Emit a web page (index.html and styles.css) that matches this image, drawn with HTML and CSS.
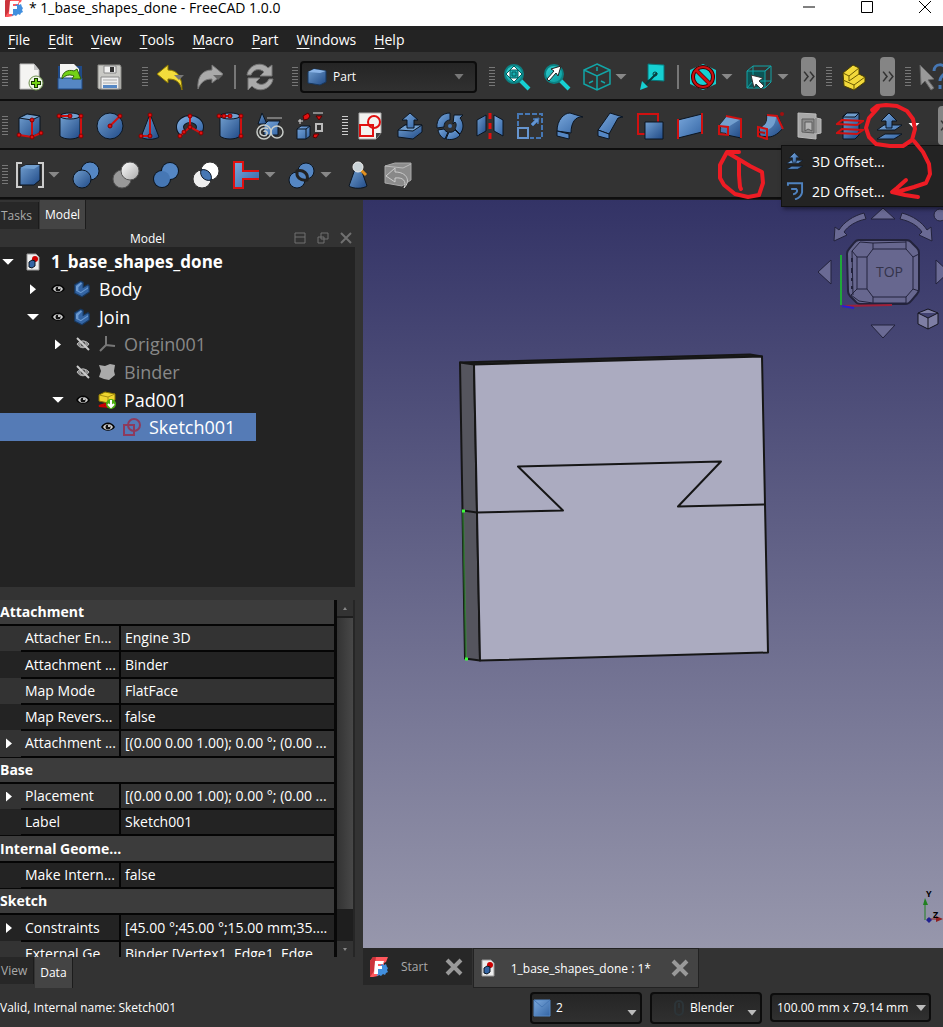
FILE: index.html
```html
<!DOCTYPE html>
<html lang="en">
<head>
    <meta charset="UTF-8">
    <meta name="viewport" content="width=device-width, initial-scale=1.0">
    <title>* 1_base_shapes_done - FreeCAD 1.0.0</title>
    <link rel="stylesheet" href="styles.css">
</head>
<body>

<!-- Shared gradients and symbols -->
<svg class="defs" aria-hidden="true">
    <defs>
        <linearGradient id="blue" x1="0" y1="0" x2="1" y2="1">
            <stop offset="0" stop-color="#729fcf"/><stop offset="1" stop-color="#204a87"/>
        </linearGradient>
        <linearGradient id="lite" x1="0" y1="0" x2="1" y2="1">
            <stop offset="0" stop-color="#7aa8dc"/><stop offset="1" stop-color="#3465a4"/>
        </linearGradient>
        <linearGradient id="grey" x1="0" y1="0" x2="1" y2="1">
            <stop offset="0" stop-color="#ffffff"/><stop offset="1" stop-color="#a8a8a8"/>
        </linearGradient>
        <linearGradient id="teal" x1="0" y1="0" x2="1" y2="1">
            <stop offset="0" stop-color="#34d0d2"/><stop offset="1" stop-color="#06989a"/>
        </linearGradient>
        <symbol id="i-logo" viewBox="0 0 18 20">
            <path d="M3 0h15l-2 5-2 1v4l-6 9-5 1H0V4z" fill="#ff585d"/>
            <path d="M0 4l3-4h3L4 14l-4 6z" fill="#cb333b"/>
            <path d="M10 9l2-2 2 1 2-1 1 3 1 1-1 2 1 2-2 1-1 2-2-1-2 2-2-1-2 1 1-8z" fill="#418fde"/>
            <path d="M5 4h9l-1 3H8v2h4v3H8v5H4z" fill="#fff"/>
        </symbol>
        <symbol id="i-doc" viewBox="0 0 14 18">
            <path d="M1 1h9l3 3v13H1z" fill="#eee" stroke="#999"/>
            <circle cx="9" cy="6" r="3" fill="#cc0000"/>
            <path d="M3 9l3-2 3 1v5l-3 2-3-1z" fill="#3465a4" stroke="#0b1521"/>
        </symbol>
        <symbol id="i-eye" viewBox="0 0 14 10">
            <path d="M0 5c3-6 11-6 14 0-3 5-11 5-14 0z" fill="#050505"/>
            <path d="M2 5c2-4 8-4 10 0-2 4-8 4-10 0z" fill="#d0d0d0"/>
            <circle cx="7" cy="5" r="2.500" fill="#111"/><circle cx="8" cy="4" r="1" fill="#fff"/>
        </symbol>
        <symbol id="i-hidden" viewBox="0 0 14 14">
            <path d="M1 7c3-4 9-4 12 0-3 5-9 5-12 0z" fill="#888" stroke="#bbb"/>
            <circle cx="7" cy="7" r="3" fill="#555" stroke="#aaa"/>
            <path d="M1 1l12 12" stroke="#ccc" stroke-width="2"/>
        </symbol>
        <symbol id="i-body" viewBox="0 0 14 15">
            <path d="M1 4l5-3 2 1v4l4-2 1 1v5l-6 4-6-3z" fill="#3465a4" stroke="#173860"/>
            <path d="M2 5l4-3 1 1-3 3v3l2 1 6-4v1l-6 4-4-2z" fill="#6b9ad2"/>
        </symbol>
        <symbol id="i-sketch" viewBox="0 0 18 18">
            <g fill="none" stroke="#8d3a5c" stroke-width="2"><path d="M1 7h10v10H1z"/><circle cx="11" cy="7" r="6"/></g>
        </symbol>
        <symbol id="i-offset3d" viewBox="0 0 28 28">
            <g fill="url(#lite)" stroke="#0b1521">
                <path d="M8 13h18l-7 5H1zM9 22h17l-8 5H1z"/>
                <path d="M13 1l8 8h-5v7h-6V9H5z"/>
            </g>
        </symbol>
        <symbol id="i-more" viewBox="0 0 15 40">
            <path d="M3 15l4 5-4 5M9 15l4 5-4 5" fill="none" stroke="#333" stroke-width="1.6"/>
        </symbol>
    </defs>
</svg>

<!-- Title Bar -->
<header class="titlebar">
    <svg class="logo"><use href="#i-logo"/></svg>
    <h1>* 1_base_shapes_done - FreeCAD 1.0.0</h1>
    <div class="window-buttons">
        <button aria-label="Minimize"><svg viewBox="0 0 14 14"><path d="M1 7h12"/></svg></button>
        <button aria-label="Maximize"><svg viewBox="0 0 14 14"><path d="M1.500 1.500h11v11h-11z"/></svg></button>
        <button aria-label="Close"><svg viewBox="0 0 14 14"><path d="M1 1l12 12M13 1L1 13"/></svg></button>
    </div>
</header>

<!-- Menu Bar -->
<nav class="menubar">
    <button><u>F</u>ile</button>
    <button><u>E</u>dit</button>
    <button><u>V</u>iew</button>
    <button><u>T</u>ools</button>
    <button><u>M</u>acro</button>
    <button><u>P</u>art</button>
    <button><u>W</u>indows</button>
    <button><u>H</u>elp</button>
</nav>

<!-- File, Workbench and View Toolbars -->
<div class="toolbar">
    <div class="group">
        <span class="grip"></span>
        <button class="tool" aria-label="New"><svg viewBox="0 0 28 28"><path d="M4 1h14l5 6v19H4z" fill="#f4f4f2" stroke="#bbb"/><path d="M18 1v6h5z" fill="#c4c4c4"/><circle cx="20" cy="20" r="7" fill="#eef5e8" stroke="#6b8f4a"/><path d="M20 15v10M15 20h10" stroke="#173b02" stroke-width="4"/><path d="M20 16v8M16 20h8" stroke="#73d216" stroke-width="2"/></svg></button>
        <button class="tool" aria-label="Open"><svg viewBox="0 0 28 28"><path d="M2 3h24v23H2z" fill="#204a87"/><path d="M4 1h14l5 5v12H4z" fill="#f4f4f2"/><path d="M2 15h24v11H2z" fill="#5587c4" stroke="#204a87"/><path d="M6 16c0-7 6-10 12-8l3-2 4 10-9 0 2-3c-4-2-9-1-12 3z" fill="#73d216" stroke="#2f5e08"/></svg></button>
        <button class="tool" aria-label="Save"><svg viewBox="0 0 28 28"><path d="M2 2h22l1 2v22H3l-1-1z" fill="#c9c9c5" stroke="#8c8c88"/><path d="M8 3h12v7H8z" fill="#f0f0f0" stroke="#888"/><path d="M14 4h4v5h-4z" fill="#333"/><path d="M5 14h18v12H5z" fill="#eee" stroke="#888"/><path d="M7 17h14M7 20h14" stroke="#aaa"/><path d="M7 22h14v3H7z" fill="#5587c4"/></svg></button>
    </div>
    <div class="group">
        <span class="grip"></span>
        <button class="tool" aria-label="Undo"><svg viewBox="0 0 28 28"><path d="M1 11L12 2v5c10 0 14 7 14 20-2-8-6-11-14-11v4z" fill="#f3dc3c" stroke="#8a7600"/><path d="M18 12h10l-5 5z" fill="#777"/></svg></button>
        <button class="tool" aria-label="Redo"><svg viewBox="0 0 28 28"><path d="M27 11L16 2v5C6 7 1 14 2 26c3-7 7-10 14-10v4z" fill="#aaa" stroke="#777"/><path d="M17 12h10l-5 5z" fill="#666"/></svg></button>
        <span class="separator"></span>
        <button class="tool" aria-label="Refresh"><svg viewBox="0 0 28 28"><path d="M1 12C3 1 16-2 22 5l4-3v11H14l4-4c-4-4-11-3-13 3zM27 16c-2 11-15 14-21 7l-4 4V15h12l-4 4c4 4 10 3 13-3z" fill="#aaa" stroke="#777"/></svg></button>
    </div>
    <div class="group workbench">
        <span class="grip"></span>
        <label class="combo combo-wide">
            <svg class="combo-icon" viewBox="0 0 20 18"><path d="M1 4l6-3 12 2v11l-6 3-12-2z" fill="url(#blue)" stroke="#173860"/><path d="M1 4l6-3 12 2-6 2z" fill="#8ab4e6"/></svg>
            <select aria-label="Workbench"><option>Part</option></select>
        </label>
    </div>
    <div class="group tight">
        <span class="grip"></span>
        <button class="tool" aria-label="Fit all"><svg viewBox="0 0 28 28"><path d="M17 17l9 9" stroke="#16d0d2" stroke-width="4"/><circle cx="11" cy="11" r="9" fill="url(#teal)" stroke="#0b8284" stroke-width="2"/><path d="M11 3l4 4H7zM11 19l4-4H7zM3 11l4-4v8zM19 11l-4-4v8z" fill="#fff" stroke="#06595a"/><path d="M9 9h4v4H9z" fill="#16b0b2" stroke="#06595a"/></svg></button>
        <button class="tool" aria-label="Fit selection"><svg viewBox="0 0 28 28"><path d="M17 17l9 9" stroke="#16d0d2" stroke-width="4"/><circle cx="11" cy="11" r="9" fill="url(#teal)" stroke="#0b8284" stroke-width="2"/><path d="M4 16l7-8-3-2 10-3-3 10-2-3-7 8z" fill="#fff" stroke="#222"/></svg></button>
        <button class="tool" aria-label="Isometric"><svg viewBox="0 0 28 28"><path d="M14 1l13 6v14l-13 6-13-6V7zM1 7l13 6 13-6M14 13v14M14 4v4M6 20l4-2M22 20l-4-2" fill="none" stroke="#12a5a7" stroke-width="1.500"/></svg><i class="caret"></i></button>
        <button class="tool" aria-label="Align view"><svg viewBox="0 0 28 28"><path d="M9 1l16 1v16L9 17z" fill="#16d0d2" stroke="#06777a"/><path d="M18 10L6 22" stroke="#073b3c" stroke-width="2"/><circle cx="16" cy="11" r="2" fill="none" stroke="#073b3c"/><path d="M1 27l2-9 6 6z" fill="#16d0d2"/></svg></button>
        <span class="separator"></span>
        <button class="tool" aria-label="Draw style"><svg viewBox="0 0 28 28"><path d="M14 1l13 6v14l-13 6-13-6V7z" fill="#16d0d2"/><circle cx="14" cy="14" r="10" fill="none" stroke="#3c0000" stroke-width="4"/><path d="M7 7l14 14" stroke="#3c0000" stroke-width="4"/><circle cx="14" cy="14" r="10" fill="none" stroke="#cc1010" stroke-width="2"/><path d="M7 7l14 14" stroke="#cc1010" stroke-width="3"/></svg><i class="caret"></i></button>
        <button class="tool" aria-label="Selection"><svg viewBox="0 0 28 28"><path d="M2 8h18v17H2z" fill="#0c5556"/><path d="M2 8l6-5h18l-6 5H2v17h18V8l6-5v16l-6 6M8 3v15h18M8 18l-6 7" fill="none" stroke="#12a5a7"/><path d="M6 12l12 3-4 3 5 5-3 3-5-5-2 4z" fill="#fff" stroke="#333"/></svg><i class="caret"></i></button>
        <button class="more" aria-label="More"><svg><use href="#i-more"/></svg></button>
    </div>
    <div class="group tight">
        <span class="grip"></span>
        <button class="tool" aria-label="Part"><svg viewBox="0 0 28 28"><path d="M3 10l10-8 6 3v6l6 3v5l-11 8-10-4z" fill="#f2d93b" stroke="#4a3f00"/><path d="M3 10l6 3 10-8M9 13v5l10-7M3 17l11 5 11-8M14 22v5" fill="none" stroke="#6a5a00"/></svg></button>
        <button class="more" aria-label="More"><svg><use href="#i-more"/></svg></button>
    </div>
    <div class="group">
        <span class="grip"></span>
        <button class="tool" aria-label="What's this?"><svg viewBox="0 0 28 28"><path d="M1 2l14 14-6 1 6 8-3 2-6-9-4 4z" fill="#999" stroke="#666"/><path d="M15 8c0-8 11-8 12-1 0 5-6 5-6 11M21 22v4" fill="none" stroke="#4677b4" stroke-width="3"/></svg></button>
    </div>
</div>

<!-- Primitives and Part Tools -->
<div class="toolbar">
    <div class="group">
        <span class="grip"></span>
        <button class="tool" aria-label="Cube"><svg viewBox="0 0 28 28"><path d="M3 6l8-4 13 2v17l-9 4-12-2z" fill="url(#blue)" stroke="#0b1521"/><path d="M3 6l8-4 13 2-8 4z" fill="#729fcf" stroke="#0b1521"/><path class="red" d="M16 8v17M3 23l13 2 9-4"/><g class="dots"><circle cx="16" cy="8" r="2"/><circle cx="3" cy="23" r="2"/><circle cx="16" cy="25" r="2"/><circle cx="25" cy="21" r="2"/></g></svg></button>
        <button class="tool" aria-label="Cylinder"><svg viewBox="0 0 28 28"><path d="M4 4v20c4 4 16 4 20 0V4z" fill="url(#blue)" stroke="#0b1521"/><ellipse cx="14" cy="4" rx="10" ry="3" fill="#729fcf" stroke="#0b1521"/><path class="red" d="M3 4h11M25 4v20"/><g class="dots"><circle cx="3" cy="4" r="2"/><circle cx="14" cy="4" r="2"/><circle cx="25" cy="4" r="2"/><circle cx="25" cy="24" r="2"/></g></svg></button>
        <button class="tool" aria-label="Sphere"><svg viewBox="0 0 28 28"><circle cx="14" cy="14" r="13" fill="url(#blue)" stroke="#0b1521"/><path class="red" d="M14 14L24 4"/><g class="dots"><circle cx="14" cy="14" r="2"/><circle cx="24" cy="4" r="2"/></g></svg></button>
        <button class="tool" aria-label="Cone"><svg viewBox="0 0 28 28"><path d="M14 2L5 25c4 3 14 3 18 0z" fill="url(#blue)" stroke="#0b1521"/><path class="red" d="M14 3v21H5"/><g class="dots"><circle cx="14" cy="3" r="2"/><circle cx="14" cy="24" r="2"/><circle cx="5" cy="24" r="2"/></g></svg></button>
        <button class="tool" aria-label="Torus"><svg viewBox="0 0 28 28"><ellipse cx="14" cy="15" rx="10" ry="8" fill="none" stroke="#0b1521" stroke-width="8"/><ellipse cx="14" cy="15" rx="10" ry="8" fill="none" stroke="url(#lite)" stroke-width="6"/><path d="M14 15L4 24l4 4h14l3-7z" fill="#333"/><path class="red" d="M14 4v11l11 6M14 15l-10 9"/><g class="dots"><circle cx="14" cy="4" r="2"/><circle cx="14" cy="15" r="2"/><circle cx="25" cy="21" r="2"/><circle cx="4" cy="24" r="2"/><circle cx="8" cy="20" r="2"/></g></svg></button>
        <button class="tool" aria-label="Tube"><svg viewBox="0 0 28 28"><path d="M4 4v20c4 4 16 4 20 0V4z" fill="url(#blue)" stroke="#0b1521"/><ellipse cx="14" cy="4" rx="10" ry="3" fill="#729fcf" stroke="#0b1521"/><path class="red" d="M3 4h12M25 4v20"/><g class="dots"><circle cx="3" cy="4" r="2"/><circle cx="8" cy="4" r="2"/><circle cx="14" cy="4" r="2"/><circle cx="25" cy="4" r="2"/><circle cx="25" cy="24" r="2"/></g></svg></button>
        <button class="tool" aria-label="Primitives"><svg viewBox="0 0 28 28"><path d="M6 1L2 12h9z" fill="url(#blue)" stroke="#0b1521"/><path d="M11 6h15" stroke="#777" stroke-width="2"/><path d="M8 13l4-4h12l-2 4v10H8z" fill="url(#lite)" stroke="#0b1521"/><g fill="none" stroke="#c8ccc8" stroke-width="1.500"><circle cx="8" cy="20" r="7"/><path d="M8 20c0-2 4-1 3 2s-7 2-7-2 6-5 8-3"/><circle cx="21" cy="20" r="6"/></g></svg></button>
        <button class="tool" aria-label="Shape builder"><svg viewBox="0 0 28 28"><path d="M1 17l4-3h9v10l-4 3H1z" fill="url(#lite)" stroke="#0b1521"/><path d="M1 17h9v10M10 17l4-3" fill="none" stroke="#0b1521"/><path d="M4 7v5M2 9h5M17 1h10" stroke="#ddd"/><path d="M20 12h6v7h-6z" fill="none" stroke="#bbb" stroke-width="2"/><path d="M7 4l5-3 2 3-2 3-4 1zM20 4h6l-3 4zM18 22l5 0-3 4-3-1z" fill="#e01010" stroke="#500"/></svg></button>
    </div>
    <div class="group">
        <span class="grip bright"></span>
        <button class="tool" aria-label="Sketch"><svg viewBox="0 0 28 28"><path d="M3 1h22v20l-5 6H3z" fill="#f2f2f0" stroke="#aaa"/><path d="M20 27v-6h5z" fill="#444"/><g fill="none" stroke="#e01010" stroke-width="2"><path d="M4 13h13v11H4z"/><circle cx="18" cy="10" r="6"/></g></svg></button>
        <button class="tool" aria-label="Extrude"><svg viewBox="0 0 28 28"><path d="M2 18l7-5h17v7l-9 7-15-2z" fill="url(#blue)" stroke="#0b1521"/><path d="M2 18l7-5h17l-9 6z" fill="#729fcf" stroke="#0b1521"/><path d="M14 1l8 7h-4v8h-7V8H6z" fill="url(#lite)" stroke="#0b1521"/></svg></button>
        <button class="tool" aria-label="Revolve"><svg viewBox="0 0 28 28"><g fill="url(#lite)" stroke="#0b1521"><path d="M14 1v7c-4 0-6 3-6 7l-7 1C0 7 6 1 14 1z"/><path d="M2 18l6-1c1 2 3 3 4 3l-3 7c-3-1-6-4-7-9z"/><path d="M13 20c3 1 5-1 6-2l5 5c-4 5-10 5-14 4z"/><path d="M19 17c1-2 2-5 0-7l-2 2 1-9 9 0-3 3c4 5 4 11 0 16z"/></g><circle cx="14" cy="14" r="2" fill="#4677b4"/></svg></button>
        <button class="tool" aria-label="Mirror"><svg viewBox="0 0 28 28"><path d="M1 8l9-5v16l-9 5z" fill="url(#blue)" stroke="#0b1521"/><path d="M27 8l-9-5v16l9 5z" fill="url(#lite)" stroke="#0b1521"/><path d="M14 1v6M14 11v6M14 21v6" stroke="#e01010" stroke-width="3"/></svg></button>
        <button class="tool" aria-label="Scale"><svg viewBox="0 0 28 28"><path d="M2 2h24v24H2z" fill="none" stroke="#4677b4" stroke-width="2" stroke-dasharray="5 2"/><path d="M0 14h14v14H0z" fill="#333"/><path d="M2 16h10v10H2z" fill="none" stroke="#6695cf" stroke-width="2"/><path d="M15 12l4-4-2-1 6-1-1 6-1-2-4 4z" fill="#6695cf" stroke="#4677b4"/></svg></button>
        <button class="tool" aria-label="Fillet"><svg viewBox="0 0 28 28"><path d="M1 19C1 8 8 1 14 1l13 4c-8-1-12 6-12 16z" fill="url(#lite)" stroke="#0b1521"/><path d="M1 19l12 3v5L1 24z" fill="#5587c4" stroke="#0b1521"/></svg></button>
        <button class="tool" aria-label="Chamfer"><svg viewBox="0 0 28 28"><path d="M2 18L14 1l13 4-5 1-9 16z" fill="url(#lite)" stroke="#0b1521"/><path d="M2 18l11 4v5L2 24z" fill="#5587c4" stroke="#0b1521"/></svg></button>
        <button class="tool" aria-label="Make face"><svg viewBox="0 0 28 28"><path class="red" d="M2 2h20v20H2z"/><path d="M9 10h18v17H9z" fill="url(#blue)" stroke="#0b1521"/></svg></button>
        <button class="tool" aria-label="Ruled surface"><svg viewBox="0 0 28 28"><path d="M2 8l24-6v18L2 26z" fill="url(#lite)" stroke="#0b1521"/><path class="red" d="M2 7v20M26 1v21"/></svg></button>
        <button class="tool" aria-label="Loft"><svg viewBox="0 0 28 28"><path d="M3 14l8-10 14 3v19l-14-3z" fill="url(#blue)" stroke="#0b1521"/><path d="M3 14l8-10 14 3-13 8z" fill="#729fcf"/><path class="red" d="M10 4l15 3v19M3 14l9 1v8l-9-1z"/><path d="M5 16l5 1v4l-5-1z" fill="#4677b4"/></svg></button>
        <button class="tool" aria-label="Sweep"><svg viewBox="0 0 28 28"><path d="M3 16c7-2 9-7 8-13l11 1 5 12c-4 5-9 9-15 9l-8-1z" fill="url(#blue)" stroke="#0b1521"/><path d="M3 16c7-2 9-7 8-13l9 1c0 7-3 12-9 14z" fill="#729fcf"/><path class="red" d="M11 3l10 1 6 13M2 15l9 2v10l-9-3z"/><path d="M3 20l6 1" stroke="#b01010" stroke-width="2"/><circle cx="26" cy="2" r="2" fill="#a01010"/></svg></button>
        <button class="tool" aria-label="Section"><svg viewBox="0 0 28 28"><path d="M2 1l18 1v4l5 1v14l-5 1v5L2 25z" fill="#a8a8a8" stroke="#bbb"/><path d="M6 7h12v14l-12-1z" fill="#8c8c8c" stroke="#5c5c5c"/><path d="M9 10h7v9l-4-2-3 2z" fill="#b4b4b4" stroke="#5c5c5c"/><path d="M20 6v15" stroke="#777"/></svg></button>
        <button class="tool" aria-label="Cross-sections"><svg viewBox="0 0 28 28"><path d="M7 4l4-3h12v22l-4 4H7z" fill="url(#blue)" stroke="#0b1521"/><path d="M7 5l4-4h12l-4 4z" fill="#729fcf" stroke="#0b1521"/><path d="M6 8l21 1-6 4-20-1zM6 17l21 1-6 4-20-1z" fill="none" stroke="#d01010" stroke-width="2"/></svg></button>
        <button class="tool" aria-label="Offset"><svg><use href="#i-offset3d"/></svg><i class="caret white"></i></button>
    </div>
    <button class="more" aria-label="More"><svg><use href="#i-more"/></svg></button>
    <div class="offset-menu" role="menu">
        <button role="menuitem"><svg><use href="#i-offset3d"/></svg>3D Offset...</button>
        <button role="menuitem"><svg viewBox="0 0 28 28"><g fill="none" stroke="#4f82bf" stroke-width="3"><path d="M3 6V2h22v14c-1 6-5 9-11 11"/><path d="M8 11h8c3 3 0 8-5 8" /></g></svg>2D Offset...</button>
    </div>
</div>

<!-- Boolean Tools -->
<div class="toolbar">
    <div class="group">
        <span class="grip"></span>
        <button class="tool" aria-label="Compound"><svg viewBox="0 0 28 28"><path d="M4 7l6-3h14v15l-6 5H4z" fill="url(#blue)" stroke="#0b1521"/><path d="M4 7l6-3h14l-6 4z" fill="#729fcf"/><path d="M6 2H1v24h5M22 2h5v24h-5" fill="none" stroke="#ccc" stroke-width="2"/></svg><i class="caret"></i></button>
        <button class="tool" aria-label="Boolean"><svg viewBox="0 0 28 28"><circle cx="18" cy="10" r="9" fill="#5587c4" stroke="#0b1521"/><circle cx="10" cy="18" r="9" fill="url(#blue)" stroke="#0b1521"/></svg></button>
        <button class="tool" aria-label="Cut"><svg viewBox="0 0 28 28"><circle cx="10" cy="18" r="9" fill="#999" stroke="#555"/><circle cx="18" cy="10" r="9" fill="url(#grey)" stroke="#555"/></svg></button>
        <button class="tool" aria-label="Union"><svg viewBox="0 0 28 28"><g fill="#0b1521"><circle cx="18" cy="10" r="9"/><circle cx="10" cy="18" r="9"/></g><circle cx="18" cy="10" r="8" fill="#5587c4"/><circle cx="10" cy="18" r="8" fill="#4677b4"/></svg></button>
        <button class="tool" aria-label="Intersection"><svg viewBox="0 0 28 28"><circle cx="18" cy="10" r="9" fill="#fff" stroke="#333"/><circle cx="10" cy="18" r="9" fill="#eee" stroke="#333"/><path d="M9 9c6-2 12 4 10 10-6 2-12-4-10-10z" fill="#4677b4" stroke="#0b1521"/></svg></button>
        <button class="tool" aria-label="Join"><svg viewBox="0 0 28 28"><path d="M2 1h9v26H2zM11 10h16v8H11z" fill="url(#lite)"/><path d="M1 1h11M1 27h11M2 1v26M11 1v9h16M11 27v-9h16" fill="none" stroke="#e01010" stroke-width="2"/></svg><i class="caret"></i></button>
        <button class="tool" aria-label="Split"><svg viewBox="0 0 28 28"><circle cx="18" cy="10" r="8" fill="#5587c4" stroke="#0b1521"/><circle cx="9" cy="19" r="8" fill="#5587c4" stroke="#0b1521"/><path d="M9 10c6-2 12 3 10 9-7 1-11-3-10-9z" fill="#5587c4" stroke="#222" stroke-width="3"/></svg><i class="caret"></i></button>
        <button class="tool" aria-label="Check geometry"><svg viewBox="0 0 28 28"><path d="M11 8L5 25c4 3 14 3 18 0L17 8z" fill="url(#blue)" stroke="#0b1521"/><path d="M17 9l5 5" stroke="#e09020" stroke-width="3"/><circle cx="14" cy="6" r="5" fill="#c9d2d6" stroke="#eee"/></svg></button>
        <button class="tool" aria-label="Defeaturing"><svg viewBox="0 0 28 28"><path d="M1 5l10-3h16v17l-9 6-17-3z" fill="#8c8c8c" stroke="#aaa"/><path d="M1 5l18 2 8-4" fill="none" stroke="#bbb"/><path d="M2 15l9-8v4c12 0 16 9 9 16 3-7-1-11-9-10v4z" fill="#888" stroke="#ccc"/></svg></button>
    </div>
</div>

<!-- Main Area -->
<main>
    <aside>
        <div class="tabs">
            <button>Tasks</button>
            <button class="active">Model</button>
        </div>
        <div class="dock-title">
            <h2>Model</h2>
            <button aria-label="Collapse"><svg viewBox="0 0 12 12"><path d="M1 1h10v10H1zM1 5h10"/></svg></button>
            <button aria-label="Float"><svg viewBox="0 0 12 12"><path d="M4 1h7v6H4zM1 5h6v6H1z"/></svg></button>
            <button aria-label="Close"><svg viewBox="0 0 12 12"><path d="M1 1l10 10M11 1L1 11" stroke-width="2"/></svg></button>
        </div>
        <div class="tree">
            <ul>
                <li class="level-0 root"><i class="arrow open"></i><svg class="doc-icon"><use href="#i-doc"/></svg>1_base_shapes_done</li>
                <li class="level-1"><i class="arrow"></i><svg class="eye"><use href="#i-eye"/></svg><svg class="node"><use href="#i-body"/></svg>Body</li>
                <li class="level-1"><i class="arrow open"></i><svg class="eye"><use href="#i-eye"/></svg><svg class="node"><use href="#i-body"/></svg>Join</li>
                <li class="level-2 dim"><i class="arrow"></i><svg class="eye"><use href="#i-hidden"/></svg><svg class="node" viewBox="0 0 18 18"><path d="M8 1v9l9 1M8 10l-6 6" fill="none" stroke="#777" stroke-width="2"/></svg>Origin001</li>
                <li class="level-2 dim"><i class="arrow none"></i><svg class="eye"><use href="#i-hidden"/></svg><svg class="node" viewBox="0 0 18 18"><path d="M1 2l6 1 5-2 5 1-1 6 1 4-6 5-5-1-5-2 2-6z" fill="#aaa"/></svg>Binder</li>
                <li class="level-2"><i class="arrow open"></i><svg class="eye"><use href="#i-eye"/></svg><svg class="node" viewBox="0 0 18 18"><path d="M1 4l6-3 10 2v6l-7 3-9-2z" fill="#f0d530" stroke="#8a7600"/><path d="M1 4l9 2 7-3M10 6v6" fill="none" stroke="#a89010"/><path d="M1 15l6-2 4 3z" fill="none" stroke="#cc0000" stroke-width="2"/><circle cx="13" cy="13" r="5" fill="#4cae10"/><path d="M13 9v6M10 13l3 3 3-3" fill="none" stroke="#fff" stroke-width="2"/></svg>Pad001</li>
                <li class="level-3 selected"><i class="arrow none"></i><svg class="eye"><use href="#i-eye"/></svg><svg class="node"><use href="#i-sketch"/></svg>Sketch001</li>
            </ul>
        </div>
        <div class="properties">
            <table>
                <colgroup>
                    <col class="col-arrow">
                    <col class="col-name">
                    <col>
                </colgroup>
                <tbody>
                    <tr class="section"><th colspan="3">Attachment</th></tr>
                    <tr><td></td><td>Attacher En...</td><td>Engine 3D</td></tr>
                    <tr class="odd"><td></td><td>Attachment ...</td><td>Binder</td></tr>
                    <tr><td></td><td>Map Mode</td><td>FlatFace</td></tr>
                    <tr class="odd"><td></td><td>Map Revers...</td><td>false</td></tr>
                    <tr><td><i class="arrow"></i></td><td>Attachment ...</td><td>[(0.00 0.00 1.00); 0.00 °; (0.00 ...</td></tr>
                    <tr class="section"><th colspan="3">Base</th></tr>
                    <tr><td><i class="arrow"></i></td><td>Placement</td><td>[(0.00 0.00 1.00); 0.00 °; (0.00 ...</td></tr>
                    <tr class="odd"><td></td><td>Label</td><td>Sketch001</td></tr>
                    <tr class="section"><th colspan="3">Internal Geome...</th></tr>
                    <tr class="odd"><td></td><td>Make Intern...</td><td>false</td></tr>
                    <tr class="section"><th colspan="3">Sketch</th></tr>
                    <tr class="odd"><td><i class="arrow"></i></td><td>Constraints</td><td>[45.00 °;45.00 °;15.00 mm;35....</td></tr>
                    <tr><td></td><td>External Ge...</td><td>Binder [Vertex1, Edge1, Edge...</td></tr>
                </tbody>
            </table>
            <div class="scrollbar">
                <span class="scroll-button up"></span>
                <span class="thumb"></span>
                <span class="scroll-button"></span>
            </div>
        </div>
        <div class="tabs bottom">
            <button>View</button>
            <button class="active">Data</button>
        </div>
    </aside>

    <section class="workspace">
        <div class="viewport">
            <!-- Dovetail part -->
            <svg class="model" viewBox="0 0 580 747">
                <g stroke="#161616" stroke-width="2" stroke-linejoin="round">
                    <path d="M97 162l290-8 12 2-288 8z" fill="#2c2c30"/>
                    <path d="M97 162l14 2 6 296-15-2z" fill="#55555e"/>
                    <path d="M111 164l288-8 6 296-288 8z" fill="#ababc0"/>
                    <path d="M100 310l14 2 86-2-45-44 203-5-43 45 87-2" fill="none"/>
                </g>
                <path d="M100 311l3 147" stroke="#2fa32f" stroke-width="2" stroke-dasharray="1 1"/>
                <path d="M99 309h3v3h-3zM102 457h3v3h-3z" fill="#3cff3c"/>
            </svg>
            <!-- Navigation cube -->
            <svg class="nav-cube" viewBox="0 0 125 135">
                <g fill="#6a6a94" stroke="#23233c">
                    <path d="M53 11l12-11 12 11zM53 117h24L65 130zM0 64l13-12v24zM131 64l-13-12v24z"/>
                    <path d="M46 5c-11 3-20 9-25 17l-4-3-1 14 13-6-3-3c4-6 12-11 22-13zM84 5c11 3 20 9 25 17l4-3 1 14-13-6 3-3c-4-6-12-11-22-13z"/>
                    <circle cx="122" cy="7" r="6"/>
                    <path d="M41 32h47q4 0 6 3l5 5q2 2 2 5v36q0 3-2 5l-6 7q-2 3-6 3H42q-3 0-5-3l-5-5q-2-2-2-5l-1-37q0-3 2-5l5-6q2-3 5-3z" fill="#67678f" stroke-width="2"/>
                    <path d="M55 41h33l7 8v32l-7 8H55l-6-8V49zM39 49h10M39 81h10M39 49v32M55 41v-6M55 89v6M88 41v-8M88 89v6M95 49l6-3M95 81l6 2M39 49l-5-6 8-9 13 1 33-1M39 81l-6 6 8 6 14 2h33M34 43l1 44" fill="none"/>
                    <path d="M34 50v4M34 60v5M34 70v3M34 78v3" stroke-width="2"/>
                    <path d="M100 105l10-4 10 4v11l-10 5-10-5zM100 105l10 5 10-5M110 110v11" fill="#7e7ea4" stroke="#14141f"/>
                </g>
                <text x="58" y="69">TOP</text>
                <path d="M23 47v50" stroke="#1fa83a" stroke-width="2"/>
                <path d="M24 98l50-1" stroke="#a0203a" stroke-width="2"/>
                <path d="M24 98l12 2" stroke="#2a1fd0" stroke-width="2"/>
            </svg>
            <!-- Axis cross -->
            <svg class="axis" viewBox="0 0 20 40">
                <path d="M2 32V14" stroke="#208020"/><path d="M2 10l3 7h-5z" fill="#208020"/>
                <path d="M4 31h12" stroke="#902020"/><path d="M13 28l7 3-7 3z" fill="#902020"/>
                <path d="M6 29l3 3-3 3-3-3z" fill="#202090"/>
                <text x="3" y="9">Y</text><text x="10" y="30">Z</text>
            </svg>
        </div>
        <div class="doc-tabs">
            <button><svg class="logo"><use href="#i-logo"/></svg><span>Start</span><svg class="close" viewBox="0 0 18 18"><path d="M2 2l14 14M16 2L2 16"/></svg></button>
            <button class="active"><svg class="doc-icon"><use href="#i-doc"/></svg><span>1_base_shapes_done : 1*</span><svg class="close" viewBox="0 0 18 18"><path d="M2 2l14 14M16 2L2 16"/></svg></button>
        </div>
    </section>
</main>

<!-- Status Bar -->
<footer>
    <p>Valid, Internal name: Sketch001</p>
    <label class="combo">
        <svg class="combo-icon" viewBox="0 0 18 18"><path d="M1 1h16v16H1z" fill="url(#lite)" stroke="#5587c4"/><path d="M1 1l8 7 8-7" fill="none" stroke="#4677b4"/></svg>
        <select aria-label="Notifications"><option>2</option></select>
    </label>
    <label class="combo combo-nav">
        <svg class="combo-icon" viewBox="0 0 18 18"><path d="M5 6a4 4 0 0 1 8 0v6a4 4 0 0 1-8 0zM9 4v5" fill="none" stroke="#2c3438" stroke-width="2"/></svg>
        <select aria-label="Navigation style"><option>Blender</option></select>
    </label>
    <label class="combo combo-size">
        <select aria-label="View size"><option>100.00 mm x 79.14 mm</option></select>
    </label>
</footer>

<!-- Red pen notes over the toolbars -->
<svg class="notes" viewBox="0 0 240 120" aria-hidden="true">
    <path d="M36 52H24L17 65v13l4 7 11 9 13 3 11-2 4-12-1-11-12-6-10-6-12-7"/>
    <path d="M36 61v14l1 12 1 2"/>
    <path d="M175 8l-9 10-3 10 3 9 7 7 14 2 13 0 9-6 3-11-2-10-6-8-10-5-11-1-9 1-5 4"/>
    <path d="M211 41l9 11 6 12 1 10-4 9-12 4-14 4-7 1M203 80l-9 8-5 4 13 3 13 2"/>
</svg>

</body>
</html>
```
FILE: styles.css
```css
/* General Styles */
* {
    box-sizing: border-box;
}

body {
    margin: 0;
    min-height: 100vh;
    display: flex;
    flex-direction: column;
    position: relative;
    overflow: hidden;
    font-family: "Open Sans", "Noto Sans", sans-serif;
    font-size: 14px;
    color: #fff;
    background-color: #333;
}

button, select {
    font: inherit;
    color: inherit;
    background: none;
    border: none;
    padding: 0;
    margin: 0;
}

h1, h2, p, ul {
    margin: 0;
    padding: 0;
    font-weight: normal;
}

svg {
    display: block;
    flex: none;
}

.defs {
    position: absolute;
    width: 0;
    height: 0;
}

.red {
    fill: none;
    stroke: #d01010;
    stroke-width: 2;
}

.dots {
    fill: #e01010;
    stroke: #800000;
}

/* Title Bar */
.titlebar {
    height: 26px;
    display: flex;
    align-items: flex-start;
    padding: 0 11px 0 5px;
    gap: 6px;
    color: #000;
    background-color: #fff;
}

.logo {
    width: 18px;
    height: 20px;
}

.titlebar .logo {
    margin-top: -3px;
}

.titlebar h1 {
    flex: 1;
    font-size: 14px;
    line-height: 16px;
    white-space: nowrap;
}

.window-buttons {
    display: flex;
    gap: 44px;
}

.window-buttons svg {
    width: 14px;
    height: 14px;
    fill: none;
    stroke: #000;
}

/* Menu Bar */
.menubar {
    height: 26px;
    display: flex;
    align-items: center;
    gap: 18px;
    padding-left: 8px;
    background-color: #232323;
}

.menubar u {
    text-underline-offset: 3px;
}

/* Toolbars */
.toolbar {
    height: 49px;
    display: flex;
    align-items: center;
    position: relative;
    padding: 2px 0 0 2px;
    background-color: #333;
    border-bottom: 2px solid #0e0e0e;
}

.group {
    display: flex;
    align-items: center;
    flex: none;
    gap: 12px;
    margin-right: 18px;
}

.workbench {
    gap: 2px;
    margin-right: 12px;
}

.tight {
    margin-right: 10px;
}

.grip {
    width: 6px;
    height: 20px;
    margin-right: -4px;
    background: repeating-linear-gradient(#777 0 1px, #333 1px 3px);
}

.grip.bright {
    background: repeating-linear-gradient(#ccc 0 1px, #333 1px 3px);
}

.workbench .grip {
    margin-right: 0;
}

.separator {
    width: 2px;
    height: 24px;
    margin: 0 -2px;
    background-color: #777;
}

.tool {
    display: flex;
    align-items: center;
    gap: 4px;
}

.tool svg {
    width: 28px;
    height: 28px;
}

.caret {
    width: 12px;
    height: 6px;
    background-color: #888;
    clip-path: polygon(0 0, 100% 0, 50% 100%);
}

.caret.white {
    background-color: #fff;
}

.more {
    flex: none;
    width: 15px;
    height: 39px;
    border-radius: 4px;
    background-color: #858585;
}

.more svg {
    width: 15px;
    height: 39px;
}

/* Offset Menu */
.offset-menu {
    position: absolute;
    z-index: 2;
    left: 781px;
    top: 44px;
    width: 170px;
    background-color: #232323;
    border: 1px solid #111;
    box-shadow: 2px 2px 4px rgba(0, 0, 0, 0.5);
}

.offset-menu button {
    display: flex;
    align-items: center;
    width: 100%;
    height: 30px;
    gap: 8px;
    padding-left: 4px;
}

.offset-menu svg {
    width: 18px;
    height: 18px;
}

/* Combo Boxes */
.combo {
    position: relative;
    display: block;
    width: 112px;
    height: 32px;
    font-size: 12px;
    border: 2px solid #0c0c0c;
    border-radius: 4px;
    background: linear-gradient(#252525, #303030);
}

.combo select {
    appearance: none;
    width: 100%;
    height: 100%;
    padding-left: 24px;
}

.combo::after {
    content: "";
    position: absolute;
    right: 3px;
    bottom: 6px;
    width: 10px;
    height: 6px;
    background-color: #bbb;
    clip-path: polygon(0 0, 100% 0, 50% 100%);
}

.combo-icon {
    position: absolute;
    left: 1px;
    top: 5px;
    width: 18px;
    height: 18px;
}

.combo-wide {
    width: 177px;
}

.combo-wide select {
    padding-left: 31px;
}

.combo-wide .combo-icon {
    left: 5px;
    width: 20px;
}

.combo-wide::after {
    right: 11px;
    bottom: 11px;
    background-color: #777;
}

.combo-nav select {
    padding-left: 38px;
}

.combo-nav .combo-icon {
    left: 18px;
}

.combo-size {
    width: 161px;
    height: 29px;
}

.combo-size select {
    padding-left: 5px;
}

.combo-size::after {
    bottom: 9px;
}

/* Main Area */
main {
    flex: 1;
    display: flex;
    min-height: 0;
    border-top: 1px solid #1c1c1c;
}

aside {
    width: 355px;
    margin-right: 8px;
    display: flex;
    flex-direction: column;
}

/* Side Tabs */
.tabs {
    display: flex;
    align-items: flex-end;
    gap: 1px;
    height: 29px;
    font-size: 12px;
}

.tabs button {
    height: 27px;
    padding: 0 6px 0 1px;
    color: #aaa;
    background-color: #272727;
    border-right: 1px solid #1c1c1c;
}

.tabs .active {
    height: 29px;
    padding: 0 5px;
    color: #fff;
    background-color: #444;
}

.tabs.bottom {
    align-items: flex-start;
    height: 31px;
}

.tabs.bottom .active {
    height: 31px;
}

.dock-title {
    display: flex;
    align-items: center;
    gap: 11px;
    height: 18px;
    padding-right: 3px;
}

.dock-title h2 {
    flex: 1;
    padding-left: 12px;
    font-size: 12px;
    text-align: center;
}

.dock-title svg {
    width: 12px;
    height: 12px;
    fill: none;
    stroke: #707070;
}

/* Model Tree */
.tree {
    flex: 1;
    padding-top: 1px;
    background-color: #232323;
}

.tree ul {
    display: grid;
    grid-auto-rows: 1fr;
    height: 193px;
    font-size: 18px;
    list-style: none;
}

.tree li {
    display: flex;
    align-items: center;
    width: 256px;
    white-space: nowrap;
}

.arrow {
    flex: none;
    display: block;
    width: 6px;
    height: 10px;
    margin: 0 3px;
    background-color: #fff;
    clip-path: polygon(0 0, 100% 50%, 0 100%);
}

.arrow.open {
    width: 12px;
    height: 6px;
    margin: 0;
    clip-path: polygon(0 0, 100% 0, 50% 100%);
}

.arrow.none {
    visibility: hidden;
}

.level-0 { padding-left: 2px; }
.level-1 { padding-left: 27px; }
.level-2 { padding-left: 52px; }
.level-3 { padding-left: 77px; }

.root {
    font-weight: bold;
    font-size: 17px;
}

.dim {
    color: #888;
}

.selected {
    background-color: #557bb6;
}

.doc-icon {
    width: 14px;
    height: 18px;
}

.tree .doc-icon {
    margin: 0 11px 0 12px;
}

.eye {
    width: 14px;
    height: 14px;
    margin: 0 8px 0 12px;
}

.node {
    width: 18px;
    height: 18px;
    margin-right: 8px;
}

/* Property Editor */
.properties {
    display: flex;
    height: 357px;
    margin-top: 13px;
    overflow: hidden;
    background-color: #080808;
}

table {
    flex: none;
    width: 334px;
    height: 368px;
    table-layout: fixed;
    border-collapse: collapse;
}

.col-arrow {
    width: 21px;
}

.col-name {
    width: 99px;
}

th, td {
    padding: 0;
    overflow: hidden;
    font-size: 14px;
    line-height: 20px;
    text-align: left;
    white-space: nowrap;
    background-color: #333;
    border-bottom: 2px solid #050505;
}

th {
    background-color: #3c3c3c;
}

.odd td {
    background-color: #232323;
}

td:nth-child(1) {
    border-bottom: none;
}

td:nth-child(2) {
    padding-left: 4px;
    border-right: 2px solid #050505;
}

td:nth-child(3) {
    padding-left: 4px;
}

td .arrow {
    margin-left: 6px;
}

.scrollbar {
    display: flex;
    flex-direction: column;
    width: 18px;
    margin-left: 3px;
    background-color: #1e1e1e;
    border-right: 2px solid #262626;
}

.scroll-button {
    height: 16px;
    background-color: #333;
}

.scroll-button::after {
    content: "";
    display: block;
    width: 4px;
    height: 3px;
    margin: 7px auto;
    background-color: #888;
    clip-path: polygon(0 0, 100% 0, 50% 100%);
}

.scroll-button.up::after {
    clip-path: polygon(50% 0, 100% 100%, 0 100%);
}

.thumb {
    flex: 1;
    margin: 2px 0 32px;
    background: linear-gradient(90deg, #333, #484848);
}

/* 3D View */
.workspace {
    flex: 1;
    display: flex;
    flex-direction: column;
}

.viewport {
    flex: 1;
    position: relative;
    background: linear-gradient(#333366, #9797ac);
}

.model {
    position: absolute;
    width: 100%;
    height: 100%;
}

.nav-cube {
    position: absolute;
    right: 0;
    top: 8px;
    width: 125px;
    height: 135px;
}

.nav-cube text {
    font-size: 14px;
    fill: #33334a;
}

.axis {
    position: absolute;
    right: 0;
    bottom: 20px;
    width: 20px;
    height: 40px;
}

.axis text {
    font-size: 9px;
    font-weight: bold;
}

/* Document Tabs */
.doc-tabs {
    display: flex;
    align-items: flex-start;
    gap: 1px;
    height: 40px;
    font-size: 12px;
}

.doc-tabs button {
    display: flex;
    align-items: center;
    height: 37px;
    padding: 0 9px 0 7px;
    color: #aaa;
    background-color: #272727;
}

.doc-tabs .active {
    height: 40px;
    color: #fff;
    background-color: #444;
    border: 1px solid #222;
}

.doc-tabs span {
    margin: 0 17px 0 13px;
}

.doc-tabs .active span {
    margin: 0 20px 0 16px;
}

.doc-tabs .close {
    width: 18px;
    height: 18px;
    stroke: #999;
    stroke-width: 4;
}

/* Status Bar */
footer {
    display: flex;
    align-items: center;
    gap: 8px;
    height: 39px;
    padding-right: 12px;
    font-size: 12px;
}

footer p {
    flex: 1;
}

/* Red Pen Notes */
.notes {
    position: absolute;
    z-index: 3;
    left: 703px;
    top: 100px;
    width: 240px;
    height: 120px;
    fill: none;
    stroke: #ed1c24;
    stroke-width: 4;
    stroke-linecap: round;
    stroke-linejoin: round;
    pointer-events: none;
}
```
